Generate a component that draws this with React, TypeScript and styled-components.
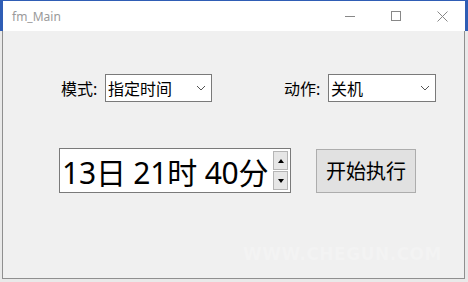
import styled, { createGlobalStyle } from "styled-components"

const Global = createGlobalStyle`
  html, body {
    margin: 0;
    padding: 0;
    background: #e9e9e9;
  }
`

const FONT = `"Noto Sans", "Noto Sans CJK SC", sans-serif`

const Screen = styled.div`
  width: 468px;
  height: 282px;
  box-sizing: border-box;
  padding: 1px 3px 3px 2px;
  background: linear-gradient(#2f5db5 0 31px, #e9e9e9 31px);
  overflow: hidden;
`

const Window = styled.div`
  display: flex;
  flex-direction: column;
  height: 100%;
  font-family: ${FONT};
`

const TitleBar = styled.div`
  display: flex;
  align-items: center;
  height: 30px;
  margin-left: 1px;
  background: #fff;
`

const Title = styled.span`
  flex: 1;
  padding-left: 9px;
  font-size: 12px;
  color: #9a9a9a;
`

const Ctrl = styled.div`
  display: flex;
  align-items: center;
  justify-content: center;
  width: 46px;
  height: 30px;
`

const Body = styled.div`
  flex: 1;
  display: flex;
  flex-direction: column;
  border: 1px solid #8f8f8f;
  border-top: none;
  background: #f0f0f0;
  padding-top: 43px;
`

const TopRow = styled.div`
  display: flex;
  justify-content: space-between;
  padding: 0 28px 0 58px;
`

const Field = styled.div`
  display: flex;
  align-items: center;
  gap: 6px;
`

const Label = styled.span`
  width: 38px;
  font-size: 16px;
  color: #000;
  white-space: nowrap;
`

const Select = styled.div<{ $w: number }>`
  display: flex;
  align-items: center;
  justify-content: space-between;
  box-sizing: border-box;
  width: ${p => p.$w}px;
  height: 28px;
  padding: 0 5px 0 2px;
  border: 1px solid #7a7a7a;
  background: #fff;
  font-size: 16px;
  color: #000;
`

const BottomRow = styled.div`
  display: flex;
  align-items: center;
  gap: 25px;
  margin-top: 46px;
  padding-left: 56px;
`

const Numeric = styled.div`
  display: flex;
  align-items: center;
  justify-content: space-between;
  box-sizing: border-box;
  width: 232px;
  height: 45px;
  padding: 0 2px 0 2px;
  border: 1px solid #7a7a7a;
  background: #fff;
`

const NumText = styled.span`
  font-size: 30px;
  color: #000;
  white-space: nowrap;
  letter-spacing: -0.2px;
`

const Spin = styled.div`
  display: flex;
  flex-direction: column;
  gap: 1px;
`

const SpinBtn = styled.div`
  display: flex;
  align-items: center;
  justify-content: center;
  box-sizing: border-box;
  width: 15px;
  height: 19px;
  border: 1px solid #b5b5b5;
  background: #e6e6e6;
`

const Button = styled.div`
  display: flex;
  align-items: center;
  justify-content: center;
  box-sizing: border-box;
  width: 100px;
  height: 44px;
  border: 1px solid #adadad;
  background: #e1e1e1;
  font-size: 20px;
  color: #000;
`

const Watermark = styled.div`
  margin-top: auto;
  margin-bottom: 14px;
  align-self: flex-end;
  margin-right: 22px;
  font-family: "DejaVu Sans", sans-serif;
  font-weight: bold;
  font-size: 17px;
  letter-spacing: 0.5px;
  color: #f3f3f3;
`

const Chevron = () => (
  <svg width="10" height="6" viewBox="0 0 10 6">
    <path d="M1 1 L5 5 L9 1" fill="none" stroke="#555" strokeWidth="1" />
  </svg>
)

const Tri = ({ up }: { up?: boolean }) => (
  <svg width="6" height="4" viewBox="0 0 6 4">
    <path d={up ? "M0 4 L3 0 L6 4 Z" : "M0 0 L3 4 L6 0 Z"} fill="#000" />
  </svg>
)

export default function App() {
  return (
    <Screen>
      <Global />
      <Window>
        <TitleBar>
          <Title>fm_Main</Title>
          <Ctrl>
            <svg width="11" height="11" viewBox="0 0 11 11">
              <path d="M0 5.5 H10" stroke="#888" strokeWidth="1" />
            </svg>
          </Ctrl>
          <Ctrl>
            <svg width="11" height="11" viewBox="0 0 11 11">
              <rect x="0.5" y="0.5" width="9" height="9" fill="none" stroke="#888" />
            </svg>
          </Ctrl>
          <Ctrl>
            <svg width="11" height="11" viewBox="0 0 11 11">
              <path d="M0.5 0.5 L10.5 10.5 M10.5 0.5 L0.5 10.5" stroke="#888" strokeWidth="1" />
            </svg>
          </Ctrl>
        </TitleBar>
        <Body>
          <TopRow>
            <Field>
              <Label>模式:</Label>
              <Select $w={107}>
                指定时间
                <Chevron />
              </Select>
            </Field>
            <Field>
              <Label>动作:</Label>
              <Select $w={108}>
                关机
                <Chevron />
              </Select>
            </Field>
          </TopRow>
          <BottomRow>
            <Numeric>
              <NumText>13日 21时 40分</NumText>
              <Spin>
                <SpinBtn><Tri up /></SpinBtn>
                <SpinBtn><Tri /></SpinBtn>
              </Spin>
            </Numeric>
            <Button>开始执行</Button>
          </BottomRow>
          <Watermark>WWW.CHEGUN.COM</Watermark>
        </Body>
      </Window>
    </Screen>
  )
}
